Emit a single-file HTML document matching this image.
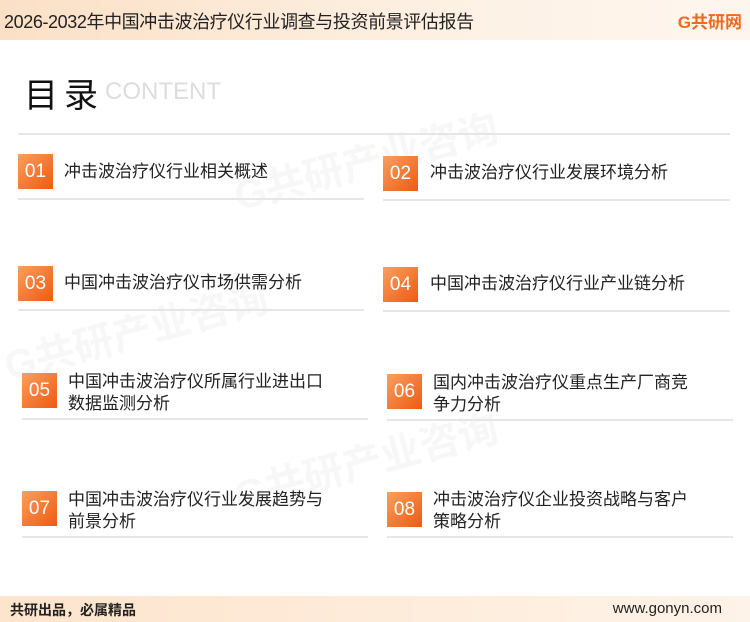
<!DOCTYPE html>
<html><head><meta charset="utf-8"><style>
*{margin:0;padding:0;box-sizing:border-box}
body{width:750px;height:622px;position:relative;background:#fff;font-family:"Liberation Sans","Noto Sans CJK SC",sans-serif;overflow:hidden;color:#222}
.hdr{position:absolute;left:0;top:0;width:750px;height:40px;background:linear-gradient(90deg,#fbe0c6,#fdf1e4 60%,#fef6ee);}
.hdr .t{position:absolute;left:4px;top:8px;font-size:18px;color:#222;letter-spacing:-0.4px}
.logo{position:absolute;right:8px;top:8px;font-size:17px;font-weight:bold;color:#f06a1c}
.ftr{position:absolute;left:0;top:596px;width:750px;height:26px;background:linear-gradient(90deg,#fde4cc,#fef3e8)}
.ftr .l{position:absolute;left:10px;top:4px;font-size:14px;font-weight:bold}
.ftr .r{position:absolute;right:28px;top:4px;font-size:15px}
.title{position:absolute;left:24px;top:68px;font-size:34px;color:#111;letter-spacing:6px}
.cont{position:absolute;left:105px;top:78px;font-size:24px;color:#ddd}
.rule{position:absolute;height:2px;background:#e6e6e6}
.box{position:absolute;width:35px;height:35px;background:linear-gradient(135deg,#f7a060,#f05a10);color:#fff;font-size:19px;text-align:center;line-height:35px}
.tx{position:absolute;font-size:17px;line-height:22px;color:#222}
.wm{position:absolute;color:#f7f7f7;font-size:40px;font-weight:bold;transform:rotate(-15deg);white-space:nowrap}
</style></head><body>
<div class="wm" style="left:230px;top:130px">G共研产业咨询</div>
<div class="wm" style="left:0px;top:300px">G共研产业咨询</div>
<div class="wm" style="left:230px;top:430px">G共研产业咨询</div>
<div class="hdr"><div class="t">2026-2032年中国冲击波治疗仪行业调查与投资前景评估报告</div><div class="logo">G共研网</div></div>
<div class="title">目录</div><div class="cont">CONTENT</div>
<div class="rule" style="left:18px;top:133px;width:712px"></div>

<div class="box" style="left:18px;top:154px">01</div><div class="tx" style="left:64px;top:161px">冲击波治疗仪行业相关概述</div>
<div class="rule" style="left:18px;top:198px;width:346px"></div>
<div class="box" style="left:383px;top:156px">02</div><div class="tx" style="left:430px;top:162px">冲击波治疗仪行业发展环境分析</div>
<div class="rule" style="left:383px;top:199px;width:347px"></div>

<div class="box" style="left:18px;top:266px">03</div><div class="tx" style="left:64px;top:272px">中国冲击波治疗仪市场供需分析</div>
<div class="rule" style="left:18px;top:309px;width:346px"></div>
<div class="box" style="left:383px;top:267px">04</div><div class="tx" style="left:430px;top:273px">中国冲击波治疗仪行业产业链分析</div>
<div class="rule" style="left:383px;top:310px;width:347px"></div>

<div class="box" style="left:22px;top:373px">05</div><div class="tx" style="left:68px;top:371px">中国冲击波治疗仪所属行业进出口<br>数据监测分析</div>
<div class="rule" style="left:22px;top:418px;width:346px"></div>
<div class="box" style="left:387px;top:374px">06</div><div class="tx" style="left:433px;top:372px">国内冲击波治疗仪重点生产厂商竞<br>争力分析</div>
<div class="rule" style="left:387px;top:419px;width:346px"></div>

<div class="box" style="left:22px;top:491px">07</div><div class="tx" style="left:68px;top:489px">中国冲击波治疗仪行业发展趋势与<br>前景分析</div>
<div class="rule" style="left:22px;top:536px;width:346px"></div>
<div class="box" style="left:387px;top:492px">08</div><div class="tx" style="left:433px;top:489px">冲击波治疗仪企业投资战略与客户<br>策略分析</div>
<div class="rule" style="left:387px;top:536px;width:346px"></div>

<div class="ftr"><div class="l">共研出品，必属精品</div><div class="r">www.gonyn.com</div></div>
</body></html>
